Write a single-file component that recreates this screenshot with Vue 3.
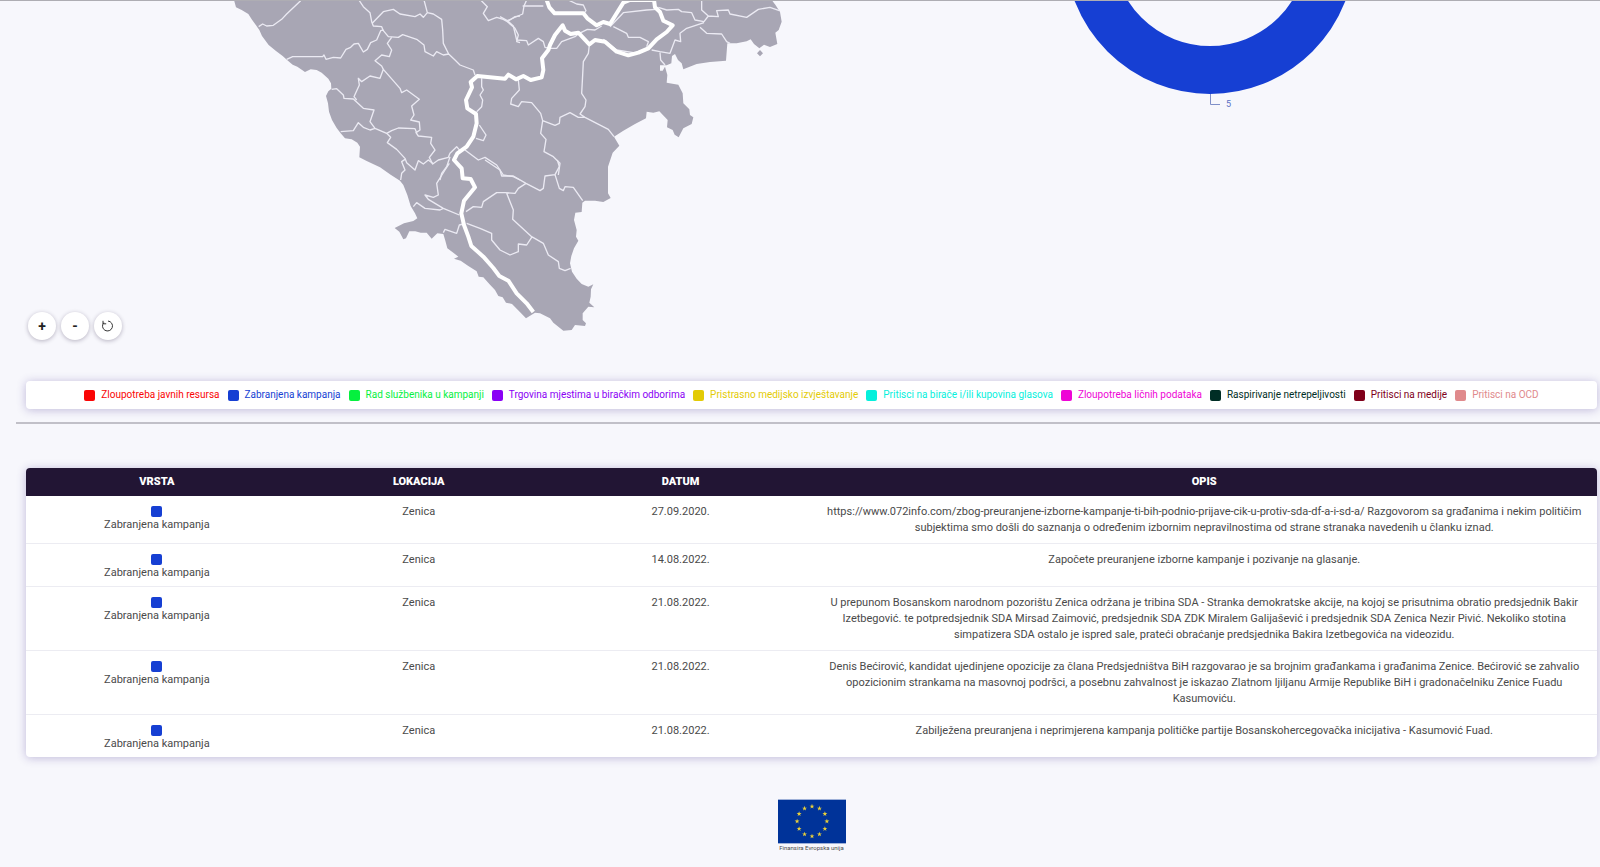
<script setup>
const categories = [
  { name: 'Zloupotreba javnih resursa', color: '#fa0505' },
  { name: 'Zabranjena kampanja', color: '#163fd3' },
  { name: 'Rad službenika u kampanji', color: '#05f03e' },
  { name: 'Trgovina mjestima u biračkim odborima', color: '#8a00f5' },
  { name: 'Pristrasno medijsko izvještavanje', color: '#e3cb05' },
  { name: 'Pritisci na birače i/ili kupovina glasova', color: '#05f0dc' },
  { name: 'Zloupotreba ličnih podataka', color: '#ee05d6' },
  { name: 'Raspirivanje netrepeljivosti', color: '#002e25' },
  { name: 'Pritisci na medije', color: '#80001a' },
  { name: 'Pritisci na OCD', color: '#e08a8c' },
]

const reports = [
  { type: 'Zabranjena kampanja', place: 'Zenica', date: '27.09.2020.', text: 'https://www.072info.com/zbog-preuranjene-izborne-kampanje-ti-bih-podnio-prijave-cik-u-protiv-sda-df-a-i-sd-a/ Razgovorom sa građanima i nekim političim subjektima smo došli do saznanja o određenim izbornim nepravilnostima od strane stranaka navedenih u članku iznad.' },
  { type: 'Zabranjena kampanja', place: 'Zenica', date: '14.08.2022.', text: 'Započete preuranjene izborne kampanje i pozivanje na glasanje.' },
  { type: 'Zabranjena kampanja', place: 'Zenica', date: '21.08.2022.', text: 'U prepunom Bosanskom narodnom pozorištu Zenica održana je tribina SDA - Stranka demokratske akcije, na kojoj se prisutnima obratio predsjednik Bakir Izetbegović. te potpredsjednik SDA Mirsad Zaimović, predsjednik SDA ZDK Miralem Galijašević i predsjednik SDA Zenica Nezir Pivić. Nekoliko stotina simpatizera SDA ostalo je ispred sale, prateći obraćanje predsjednika Bakira Izetbegovića na videozidu.' },
  { type: 'Zabranjena kampanja', place: 'Zenica', date: '21.08.2022.', text: 'Denis Bećirović, kandidat ujedinjene opozicije za člana Predsjedništva BiH razgovarao je sa brojnim građankama i građanima Zenice. Bećirović se zahvalio opozicionim strankama na masovnoj podršci, a posebnu zahvalnost je iskazao Zlatnom ljiljanu Armije Republike BiH i gradonačelniku Zenice Fuadu Kasumoviću.' },
  { type: 'Zabranjena kampanja', place: 'Zenica', date: '21.08.2022.', text: 'Zabilježena preuranjena i neprimjerena kampanja političke partije Bosanskohercegovačka inicijativa - Kasumović Fuad.' },
]

const stars = Array.from({ length: 12 }, (_, i) => {
  const a = (i * Math.PI) / 6
  return `translate(${(105 + 46 * Math.sin(a)).toFixed(1)} ${(67 - 46 * Math.cos(a)).toFixed(1)})`
})
</script>

<template>
  <main class="page">
    <section class="charts">
      <div class="map-panel">
        <svg class="map" viewBox="0 0 2400 1020" role="img" aria-label="Mapa">
          <path class="land" d="M702,0 708,22 725,30 745,42 755,58 768,76 778,90 786,108 806,135 828,153 848,168 862,181 878,194 892,200 915,216 932,208 950,210 965,218 985,236 993,250 994,266 985,274 978,288 984,310 987,335 996,360 1010,384 1022,400 1035,415 1055,418 1072,428 1080,440 1078,472 1100,483 1140,502 1172,524 1200,542 1210,555 1222,585 1232,618 1245,640 1252,655 1240,663 1212,670 1184,684 1198,695 1210,718 1218,715 1228,694 1246,694 1262,698 1280,698 1295,716 1312,700 1330,702 1336,722 1342,745 1360,758 1375,770 1362,776 1382,782 1405,798 1430,814 1436,830 1450,832 1468,852 1485,870 1495,888 1508,892 1518,908 1536,912 1556,932 1578,955 1605,938 1620,940 1650,955 1660,968 1690,992 1715,990 1725,975 1755,978 1758,970 1748,960 1748,940 1765,920 1783,922 1768,908 1772,890 1773,868 1780,853 1765,860 1745,852 1730,836 1716,815 1710,790 1714,768 1722,745 1735,722 1728,710 1730,690 1722,660 1726,638 1745,636 1747,608 1755,602 1785,602 1810,606 1832,594 1824,580 1824,500 1838,458 1858,437 1842,410 1870,392 1905,372 1938,355 1940,335 1960,338 1978,334 2003,360 2001,382 2018,390 2024,404 2036,412 2050,385 2075,372 2080,352 2070,345 2068,328 2050,310 2048,280 2035,254 2000,248 2002,225 1995,200 1988,212 1980,212 1980,196 2000,196 2014,190 2016,168 2025,162 2034,180 2045,190 2050,208 2090,192 2130,186 2178,182 2182,130 2210,130 2240,124 2252,118 2262,132 2278,145 2292,134 2310,141 2332,132 2326,98 2336,90 2345,65 2340,36 2326,14 2315,0ZM2280,150 2289,160 2280,169 2271,160Z" />
          <g class="border" transform="translate(660 0)">
            <path d="M242,2 215,28 200,42 185,58 160,76 140,78 128,72 116,80M200,178 218,170 308,170 312,165 318,178 340,172 362,174 378,148 392,142 402,132 415,130 430,156 442,148 452,128 470,120 482,92 490,90" />
            <path d="M418,2 430,20 450,38 455,65 460,78 485,80 490,92 505,110 535,112 548,104 590,118 612,135 615,155 640,168 650,155 670,165 686,162 705,180 720,195 760,210 765,225M458,68 490,35 520,28 540,42 585,50 600,42 610,52 622,38 640,42 665,58 668,90 670,130 686,162M612,0 622,38" />
            <path d="M515,112 502,130 515,150 508,170 485,165 465,182 485,198 490,208 480,235 450,228 425,245 415,235 418,255 402,290 410,300M490,208 540,265 545,278 560,270 598,298 575,318 582,345 572,360 598,366 600,390 588,398 595,408 635,412 632,430 645,450 628,472 638,492 655,480 685,472 690,460 710,440 720,452" />
            <path d="M335,268 350,266 370,285 372,295 400,297 430,325 462,330 450,365 465,385 500,400 515,392 535,384 585,386 590,398M362,395 400,392 415,368 430,382 450,390 465,385M500,400 512,412 502,428 530,448 555,475 560,488 585,510 595,482 610,492 625,480 640,492M555,478 545,485 555,510 545,520 542,540M690,470 680,500 665,520 660,540" />
            <path d="M785,235 785,260 790,270 780,285 788,300 785,320 770,335M778,375 798,405 790,422 768,415M735,450 775,480 795,472 830,495 850,525 880,530 900,540M782,0 802,20 790,40 805,62 830,52 850,58 862,65 885,50 900,48M862,65 885,85 895,105 890,125 900,128" />
          </g>
          <g class="border" transform="translate(1500 0)">
            <path d="M80,0 72,18 68,42 22,62 0,50M22,62 40,78 50,120 80,122 85,135 115,115 130,125 135,142 148,145M68,18 130,18M205,0 230,12 250,15 258,32 252,40M148,145 170,145 185,125 225,110 238,100 262,88 285,90 305,78M330,80 370,38 440,30 470,28M340,80 380,100 385,112 420,112 445,125 440,140M310,118 350,150 400,158" />
            <path d="M268,135 265,160 250,185 248,225 245,280 258,300 255,320 240,342 255,352 325,388 342,410M255,352 235,352 210,338 180,352 178,370 165,376 128,362 122,340 95,308 65,305 55,320 32,312 35,295 58,270 55,240M128,362 122,400 138,418 132,455 160,470 180,490 175,525" />
            <path d="M475,22 500,30 535,28 545,35 575,38 585,60 612,65 625,48 605,30 605,0M625,48 655,50 650,32 685,30 690,42 740,52 775,28 810,22 838,32M612,68 560,85 540,100 542,125 525,120 510,160 480,155 455,150M600,82 620,100 665,102 680,125 690,130M480,158 482,180 495,195" />
          </g>
          <g class="border" transform="translate(900 480)">
            <path d="M448,10 435,30 410,70 415,105 400,112 375,105 385,118 430,145 478,165M340,140 350,128 375,145 420,150 430,145M430,218 435,208 470,220 478,195 490,192M555,0 600,30 605,48 640,48 678,70 720,92 730,85 735,48 765,44 778,20 772,0M765,44 778,85 790,92 795,80 820,82 848,122" />
            <path d="M498,155 520,140 545,142 550,125 590,98 615,98 645,100 655,85 678,70M620,100 640,150 638,178 695,230 730,250 745,285 775,305 778,325 795,332 812,325M695,232 680,255 655,252 655,275 630,285 600,270 575,240 575,220 540,205 500,190" />
          </g>
          <path class="entity" d="M1640,0 1648,22 1664,40 1750,40 1762,55 1790,76 1810,66 1830,72 1870,8 1890,0 1962,0 1965,22 1980,36 1990,62 2018,76 2000,96 1970,118 1945,145 1915,158 1885,166 1850,155 1815,125 1785,120 1768,133 1735,98 1712,102 1695,92 1688,76 1665,105 1650,135 1645,150 1626,175 1630,210 1625,232 1592,240 1570,228 1548,238 1525,224 1515,236 1432,228 1412,246 1416,262 1398,300 1402,325 1428,342 1430,370 1420,410 1400,440 1372,460 1362,480 1385,505 1388,535 1412,537 1425,562 1392,602 1384,640 1392,675 1405,710 1414,738 1450,770 1480,804 1498,828 1525,842 1550,880 1580,910 1600,936" />
        </svg>
        <div class="controls">
          <button type="button">+</button>
          <button type="button">-</button>
          <button type="button" aria-label="Poništi">
            <svg class="reset" viewBox="0 0 12 12"><path d="M1.8 2.6A5 5 0 1 0 6 1M1 0.8V3.8H4.2" /></svg>
          </button>
        </div>
      </div>
      <div class="donut-panel">
        <svg class="donut" viewBox="0 0 300 112" role="img" aria-label="Zabranjena kampanja: 5">
          <circle class="ring" cx="150" cy="-51" r="121" />
          <path class="leader" d="M150.500 94V104.500H160" />
          <text x="166" y="107">5</text>
        </svg>
      </div>
    </section>

    <ul class="legend card">
      <li v-for="c in categories" :key="c.name" :style="{ color: c.color }">
        <span class="swatch" :style="{ background: c.color }"></span>{{ c.name }}
      </li>
    </ul>

    <hr />

    <table class="card">
      <thead>
        <tr><th>VRSTA</th><th>LOKACIJA</th><th>DATUM</th><th class="wide">OPIS</th></tr>
      </thead>
      <tbody>
        <tr v-for="(r, i) in reports" :key="i">
          <td class="type"><span class="swatch blue"></span>{{ r.type }}</td>
          <td>{{ r.place }}</td>
          <td>{{ r.date }}</td>
          <td>{{ r.text }}</td>
        </tr>
      </tbody>
    </table>

    <footer>
      <svg class="flag" viewBox="0 0 210 135" role="img" aria-label="Zastava Evropske unije">
        <rect width="210" height="135" fill="#039" />
        <path v-for="s in stars" :key="s" :transform="s" fill="#e8cf3a" d="M0,-8 2,-2.500 7.600,-2.500 3,1 4.700,6.500 0,3.100 -4.700,6.500 -3,1 -7.600,-2.500 -2,-2.500Z" />
      </svg>
      <span>Finansira Evropska unija</span>
    </footer>
  </main>
</template>

<style>
body { background: #f7f7fc; }
</style>

<style scoped>
.page {
  border-top: 1px solid #aeadb3;
  padding: 0 3px 0 26px;
  color: #4a4a4a;
  font: 11px/16px Roboto, sans-serif;
  overflow: hidden;
}
.charts {
  display: grid;
  grid-template-columns: 512fr 488fr;
  height: 380px;
  margin: -1px -3px 0 -26px;
}
.map-panel { position: relative; }
.map { display: block; width: 800px; height: 340px; }
.land { fill: #a8a6b4; }
.border { fill: none; stroke: #ebeaf3; stroke-width: 4; stroke-linejoin: round; }
.entity { fill: none; stroke: #fff; stroke-width: 12; stroke-linejoin: round; }
.controls {
  position: absolute;
  left: 28px;
  top: 312px;
  display: flex;
  gap: 5px;
}
button {
  display: grid;
  place-items: center;
  width: 28px;
  height: 28px;
  padding: 0;
  border: 0;
  border-radius: 50%;
  background: #fff;
  box-shadow: 0 1px 4px #2114374d;
  color: #222;
  font: bold 14px/28px Roboto, sans-serif;
}
.reset { width: 12px; height: 12px; fill: none; stroke: #333; overflow: visible; }
.donut-panel { display: flex; justify-content: center; }
.donut { width: 300px; height: 112px; }
.ring { fill: none; stroke: #163fd3; stroke-width: 48; }
.leader { fill: none; stroke: #7f8fc8; }
.donut text { fill: #5a70c4; font-size: 9px; }
.card {
  background: #fff;
  border-radius: 4px;
  box-shadow: 0 1px 10px #402a8a4d;
}
.legend {
  display: flex;
  justify-content: center;
  gap: 8px;
  margin: 1px 0 13px;
  padding: 6px 0;
  list-style: none;
  font-size: 10px;
}
.legend li { display: flex; align-items: center; gap: 6px; white-space: nowrap; }
.swatch { width: 11px; height: 11px; border-radius: 2px; }
hr {
  height: 2px;
  margin: 0 -3px 44px -10px;
  border: 0;
  background: #c1c0c8;
}
table {
  width: 100%;
  table-layout: fixed;
  border-collapse: collapse;
  overflow: hidden;
  text-align: center;
}
th {
  padding: 6px 0;
  background: #221534;
  color: #fff;
  font-size: 11px;
  font-weight: 900;
}
.wide { width: 50%; }
td { padding: 8px 12px 7px; vertical-align: top; }
tbody tr + tr td { border-top: 1px solid #ececf2; }
.type { line-height: 13px; }
.blue { display: block; margin: 2px auto 1px; background: #163fd3; }
footer {
  display: flex;
  flex-direction: column;
  align-items: center;
  padding: 42px 0 12px;
  font-size: 6px;
  line-height: 8px;
}
.flag { width: 68px; height: 45px; }
</style>
